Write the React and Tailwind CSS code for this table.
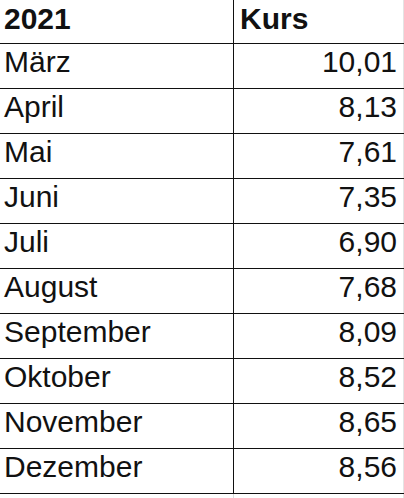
const rows = [
  ["März", "10,01"],
  ["April", "8,13"],
  ["Mai", "7,61"],
  ["Juni", "7,35"],
  ["Juli", "6,90"],
  ["August", "7,68"],
  ["September", "8,09"],
  ["Oktober", "8,52"],
  ["November", "8,65"],
  ["Dezember", "8,56"],
];

export default function App() {
  return (
    <div
      className="w-[404px] h-[498px] bg-white text-[#111] overflow-hidden"
      style={{ fontFamily: '"Liberation Sans", Arial, sans-serif' }}
    >
      {/* header */}
      <div className="flex h-[44px] border-b border-[#111]">
        <div className="w-[234px] border-r border-[#111] pl-[4px] pt-[2px] text-[30px] leading-[34px] font-bold">
          2021
        </div>
        <div className="flex-1 border-r border-[#e4e4e4] pl-[6px] pt-[2px] text-[30px] leading-[34px] font-bold">
          Kurs
        </div>
      </div>

      {rows.map(([month, kurs]) => (
        <div key={month} className="flex h-[45px] border-b border-[#111]">
          <div className="w-[234px] border-r border-[#111] pl-[4px] pt-[1px] text-[30px] leading-[34px]">
            {month}
          </div>
          <div className="flex-1 border-r border-[#e4e4e4] pr-[6px] pt-[1px] text-right text-[30px] leading-[34px]">
            {kurs}
          </div>
        </div>
      ))}

      <div className="flex h-[6px]">
        <div className="w-[234px] border-r border-[#d8d8d8]" />
        <div className="flex-1 border-r border-[#e4e4e4]" />
      </div>
    </div>
  );
}
